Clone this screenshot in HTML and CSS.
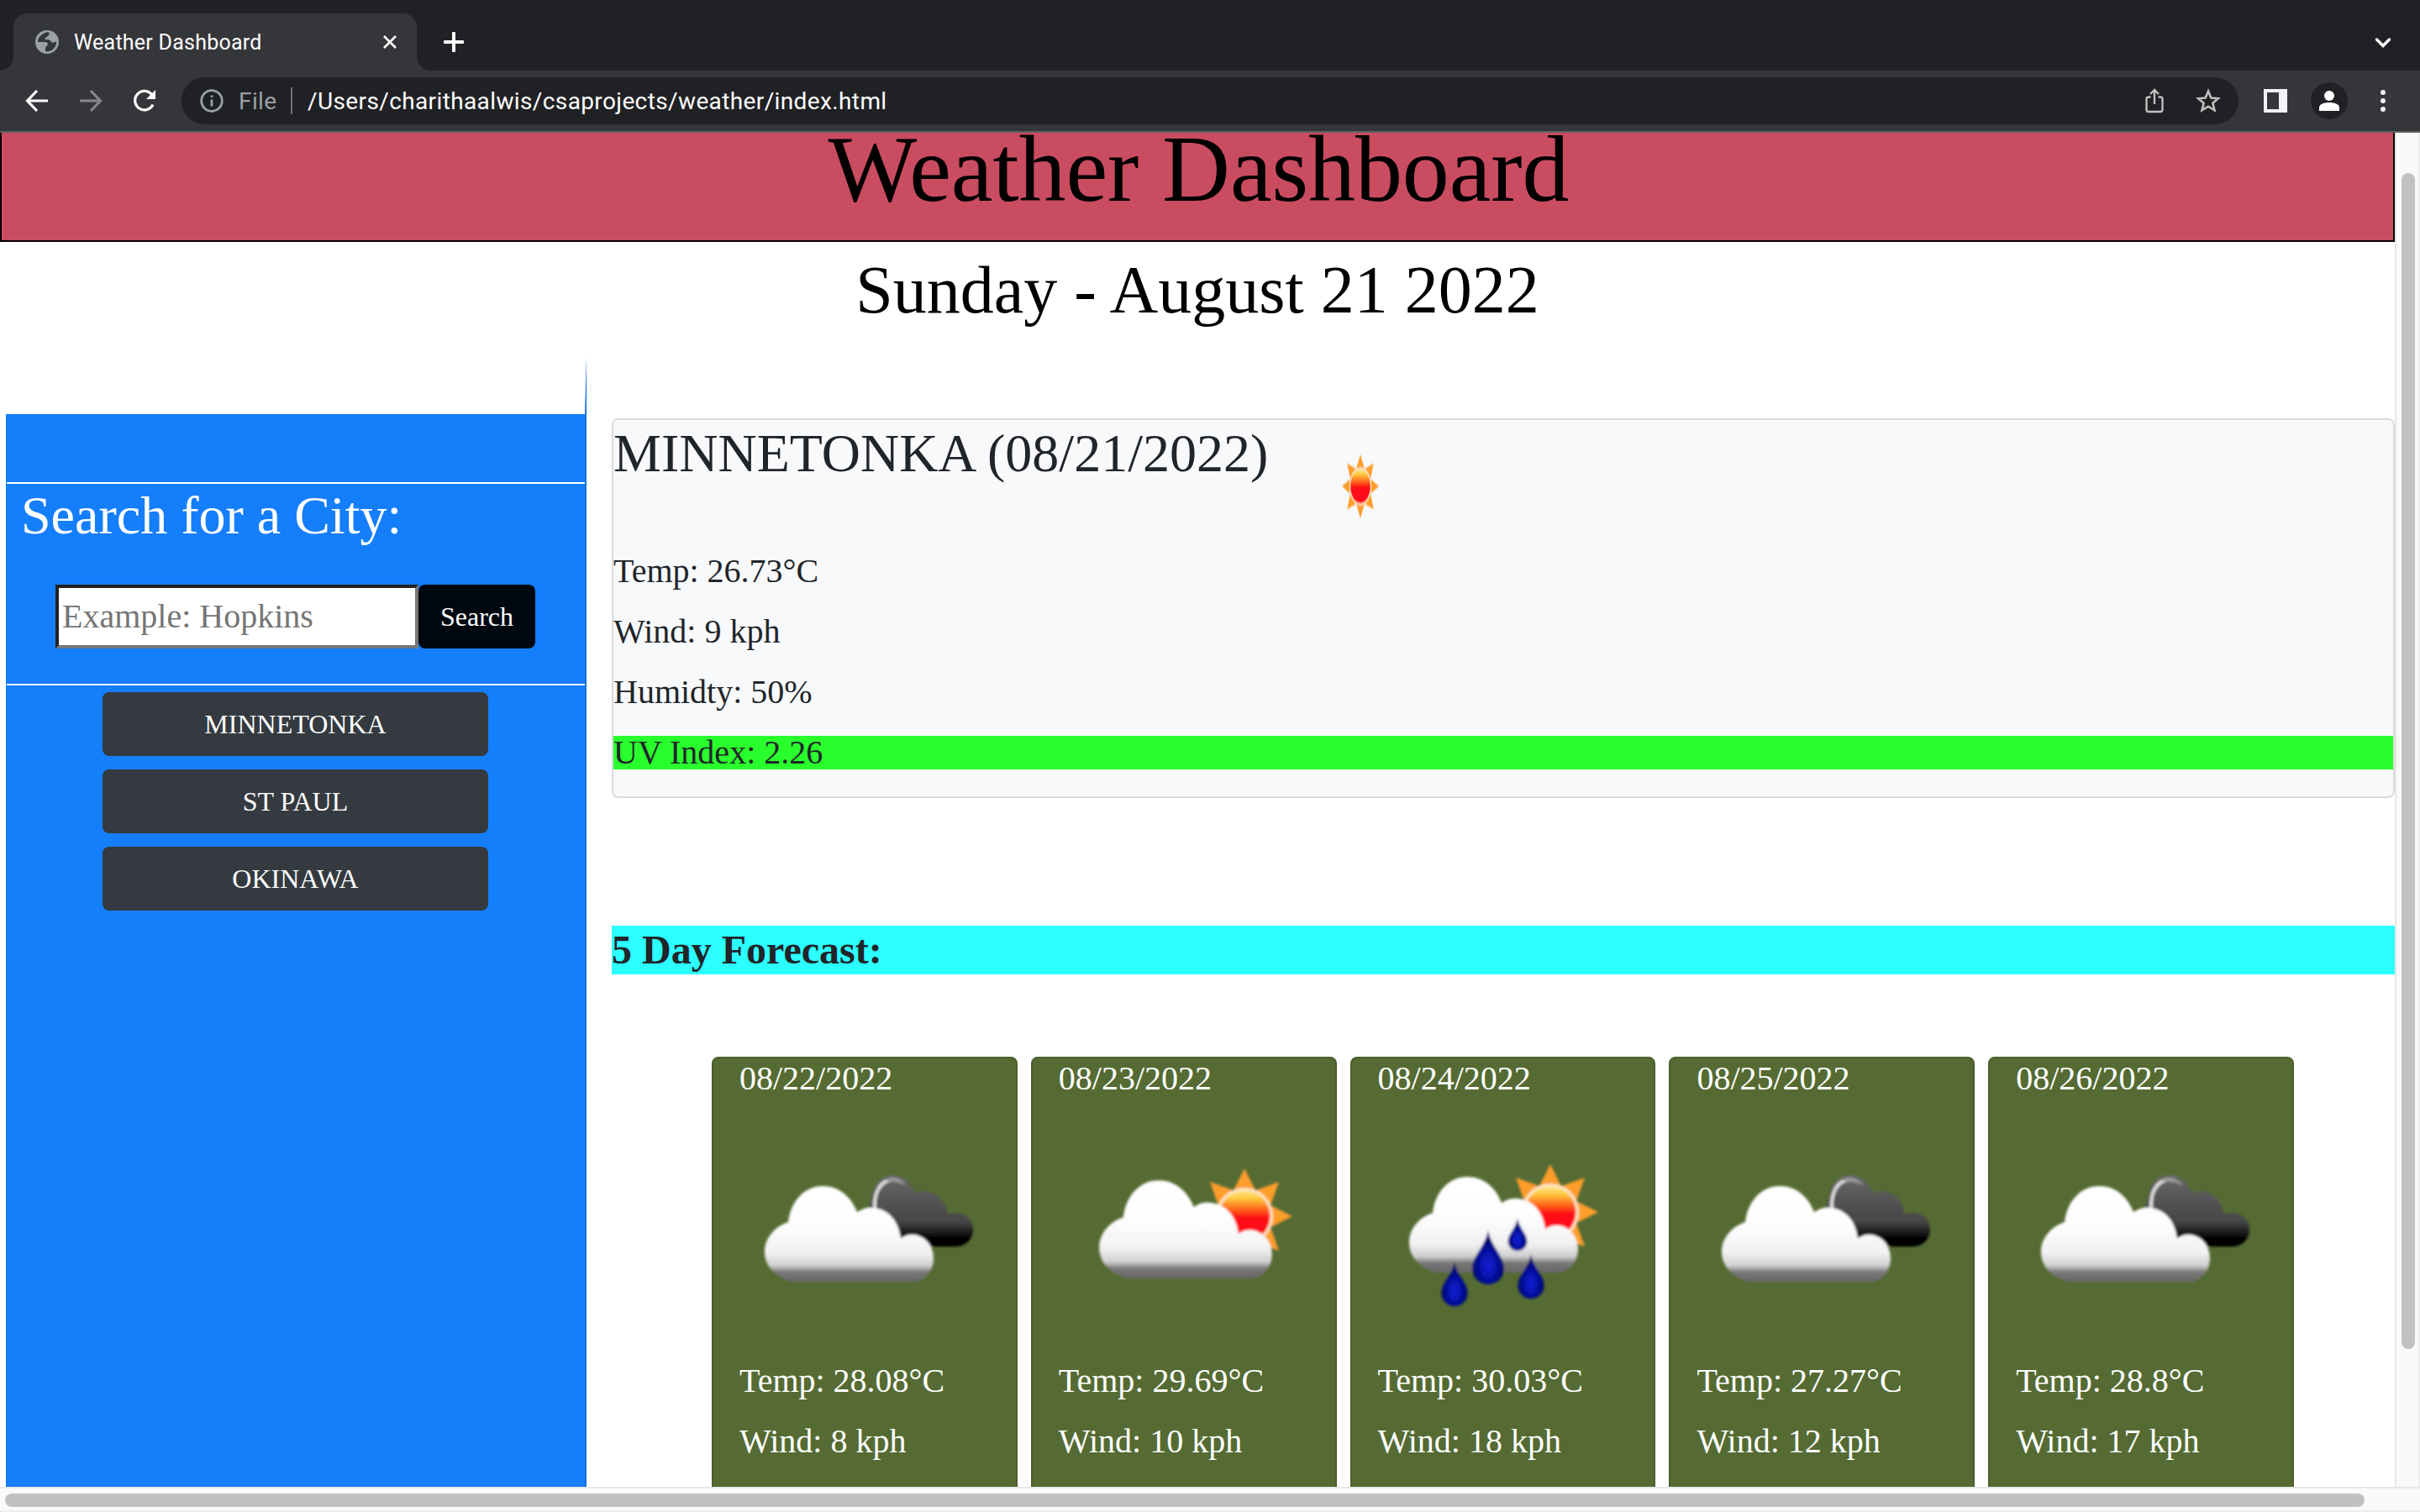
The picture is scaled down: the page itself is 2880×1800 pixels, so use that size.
FILE: index.html
```html
<!DOCTYPE html>
<html lang="en">
<head>
<meta charset="utf-8">
<title>Weather Dashboard</title>
<link rel="stylesheet" href="styles.css">
</head>
<body>
<svg class="defs" width="0" height="0" aria-hidden="true">
  <defs>
    <filter id="soft" x="-10%" y="-10%" width="120%" height="120%"><feGaussianBlur stdDeviation="1.5"/></filter>
    <linearGradient id="gWhite" x1="0" y1="0" x2="0" y2="1">
      <stop offset="0" stop-color="#fff"/><stop offset=".42" stop-color="#fdfdfd"/><stop offset=".7" stop-color="#f1f1f1"/><stop offset=".83" stop-color="#cfcfcf"/><stop offset=".9" stop-color="#777"/><stop offset="1" stop-color="#666"/>
    </linearGradient>
    <linearGradient id="gDark" x1="0" y1="0" x2="0" y2="1">
      <stop offset="0" stop-color="#686868"/><stop offset=".3" stop-color="#565656"/><stop offset=".65" stop-color="#464646"/><stop offset=".88" stop-color="#050505"/><stop offset="1" stop-color="#000"/>
    </linearGradient>
    <linearGradient id="gSun" x1="0" y1="0" x2="0" y2="1">
      <stop offset="0" stop-color="#ffe48c"/><stop offset=".15" stop-color="#ffc93c"/><stop offset=".42" stop-color="#ff4a14"/><stop offset=".52" stop-color="#ff1018"/><stop offset="1" stop-color="#ff0c1c"/>
    </linearGradient>
    <radialGradient id="gDrop" cx=".5" cy=".65" r=".5">
      <stop offset="0" stop-color="#0d20d8"/><stop offset=".5" stop-color="#0612a8"/><stop offset="1" stop-color="#02066a"/>
    </radialGradient>
    <path id="cloud" d="M60 214C42 208 29 196 29 178C29 162 41 148 57 143C60 118 76 100 98 100C118 100 132 113 139 131C146 126 152 125 160 126C178 129 188 142 191 162C197 158 202 157 208 158C221 160 230 172 230 186C230 200 222 210 210 214Z"/>
    <g id="sun">
      <path fill="#ff9d2b" d="M0-57L13-31L41-41L31-13L57 0L31 13L41 41L13 31L0 57L-13 31L-41 41L-31 13L-57 0L-31-13L-41-41L-13-31Z"/>
      <circle r="34" fill="#ffe6c4"/>
      <circle r="30.500" fill="url(#gSun)"/>
    </g>
    <path id="drop" d="M0-42C4-22 19-12 19 3A19 19 0 0 1-19 3C-19-12-4-22 0-42Z" fill="url(#gDrop)"/>
    <symbol id="clouds" viewBox="0 0 300 300">
      <g filter="url(#soft)" transform="translate(1 0)">
        <path fill="url(#gDark)" d="M140 134C152 128 155 122 157 109C161 94 170 87 182 87C194 87 203 96 209 108C226 102 243 112 247 133C262 129 277 136 277 151C277 164 268 172 256 172H200Z"/>
        <path fill="none" stroke="#ddd" stroke-width="4" stroke-linecap="round" d="M160 126C159 107 167 93 182 92"/>
        <path fill="#999" d="M172 93C180 87 191 90 198 99C190 95 180 95 172 93Z"/>
        <use href="#cloud" fill="url(#gWhite)"/>
      </g>
    </symbol>
    <symbol id="partly" viewBox="0 0 300 300">
      <g filter="url(#soft)">
        <use href="#sun" x="221" y="136"/>
        <use href="#cloud" fill="url(#gWhite)" transform="translate(18.500 -9) scale(1.023)"/>
      </g>
    </symbol>
    <symbol id="rain" viewBox="0 0 300 300">
      <g filter="url(#soft)">
        <use href="#sun" x="205" y="131"/>
        <use href="#cloud" fill="url(#gWhite)" transform="translate(8 -11)"/>
        <use href="#drop" transform="translate(166 164) scale(.6)"/>
        <use href="#drop" transform="translate(131 195)"/>
        <use href="#drop" transform="translate(91 225) scale(.82)"/>
        <use href="#drop" transform="translate(182 216) scale(.82)"/>
      </g>
    </symbol>
  </defs>
</svg>

<div class="browser">
  <div class="tabstrip">
    <div class="tab">
      <svg class="favicon" viewBox="0 0 28 28"><circle cx="14" cy="14" r="14" fill="#9aa0a6"/><path fill="#35363a" d="M12 3C7 5 3 9 3 14h9c2 0 3 2 3 3s-3 2-3 4v4c5 1 9-1 12-6 1-2 1-4 1-6-2 2-4 2-6 1-1-3-4-3-7-3-1-2 1-3 3-4s1-3 2-4c-2-1-4-1-5 0Z"/></svg>
      <span class="tab-title">Weather Dashboard</span>
      <svg class="tab-close" viewBox="0 0 20 20"><path d="M3 3L17 17M17 3L3 17"/></svg>
    </div>
    <svg class="new-tab" viewBox="0 0 24 24"><path d="M12 1.500V22.500M1.500 12H22.500"/></svg>
    <svg class="chevron" viewBox="0 0 20 14"><path d="M2.500 3L10 10.500L17.500 3"/></svg>
  </div>
  <div class="toolbar">
    <svg class="nav back" viewBox="0 0 28 28"><path d="M27 14H3M14 2L2.500 14L14 26"/></svg>
    <svg class="nav forward" viewBox="0 0 28 28"><path d="M1 14H25M14 2L25.500 14L14 26"/></svg>
    <svg class="nav reload" viewBox="0 0 28 28"><path d="M24 18.500A11.200 11.200 0 1 1 22.500 6.500"/><path class="solid" d="M27 1V12H16Z"/></svg>
    <div class="omnibox">
      <svg class="info" viewBox="0 0 28 28"><circle cx="14" cy="14" r="12.300"/><path d="M14 12.500V20.500M14 7.500V10"/></svg>
      <span class="scheme">File</span>
      <span class="divider"></span>
      <span class="url">/Users/charithaalwis/csaprojects/weather/index.html</span>
      <svg class="share" viewBox="0 0 24 32"><path d="M7.500 11.500H5A2.500 2.500 0 0 0 2.500 14V26.500A2.500 2.500 0 0 0 5 29H19A2.500 2.500 0 0 0 21.500 26.500V14A2.500 2.500 0 0 0 19 11.500H16.500M12 20V3.500M7 8L12 3L17 8"/></svg>
      <svg class="star" viewBox="0 0 30 30"><path d="M15 3.500L18.300 11.500L27 12.200L20.400 17.800L22.500 26.300L15 21.700L7.500 26.300L9.600 17.800L3 12.200L11.700 11.500Z"/></svg>
    </div>
    <svg class="panel" viewBox="0 0 28 28"><path fill-rule="evenodd" d="M0 0H28V28H0ZM4 4V24H18V4Z"/></svg>
    <svg class="avatar" viewBox="0 0 44 44"><circle cx="22" cy="22" r="22" fill="#202124"/><circle cx="22" cy="16" r="6" fill="#fff"/><path fill="#fff" d="M10 34V30C10 26 16 24 22 24S34 26 34 30V34Z"/></svg>
    <svg class="more" viewBox="0 0 6 26"><circle cx="3" cy="3" r="3"/><circle cx="3" cy="13" r="3"/><circle cx="3" cy="23" r="3"/></svg>
  </div>
</div>

<div class="viewport">
  <main class="page">
    <h1 class="banner">Weather Dashboard</h1>
    <p class="today">Sunday - August 21 2022</p>
    <div class="layout">
      <aside class="sidebar">
        <div class="search">
          <h2>Search for a City:</h2>
          <form class="search-row">
            <input type="text" placeholder="Example: Hopkins">
            <button type="button">Search</button>
          </form>
        </div>
        <div class="history">
          <button>MINNETONKA</button>
          <button>ST PAUL</button>
          <button>OKINAWA</button>
        </div>
      </aside>
      <section class="content">
        <article class="current">
          <div class="current-head">
            <h2>MINNETONKA (08/21/2022)</h2>
            <svg class="current-icon" viewBox="-57 -57 114 114" preserveAspectRatio="none"><use href="#sun" filter="url(#soft)"/></svg>
          </div>
          <p>Temp: 26.73°C</p>
          <p>Wind: 9 kph</p>
          <p>Humidty: 50%</p>
          <p class="uv">UV Index: 2.26</p>
        </article>
        <h3 class="forecast-title">5 Day Forecast:</h3>
        <div class="forecast">
          <article class="day"><p>08/22/2022</p><svg><use href="#clouds"/></svg><p>Temp: 28.08°C</p><p>Wind: 8 kph</p></article>
          <article class="day"><p>08/23/2022</p><svg><use href="#partly"/></svg><p>Temp: 29.69°C</p><p>Wind: 10 kph</p></article>
          <article class="day"><p>08/24/2022</p><svg><use href="#rain"/></svg><p>Temp: 30.03°C</p><p>Wind: 18 kph</p></article>
          <article class="day"><p>08/25/2022</p><svg><use href="#clouds"/></svg><p>Temp: 27.27°C</p><p>Wind: 12 kph</p></article>
          <article class="day"><p>08/26/2022</p><svg><use href="#clouds"/></svg><p>Temp: 28.8°C</p><p>Wind: 17 kph</p></article>
        </div>
      </section>
    </div>
  </main>
  <div class="vscroll"><div class="vthumb"></div></div>
  <div class="hscroll"><div class="hthumb"></div></div>
</div>
</body>
</html>
```
FILE: styles.css
```css
* { box-sizing: border-box; }
body {
  margin: 0;
  width: 2880px;
  height: 1800px;
  overflow: hidden;
  display: flex;
  flex-direction: column;
  background: #fff;
  font-family: "Liberation Serif", "Times New Roman", serif;
  color: #212529;
}
h1, h2, h3, p { margin: 0; font-weight: 400; }
svg { display: block; flex: none; }
.defs { position: absolute; }

/* Browser frame */
.browser { height: 158px; flex: none; font-family: Roboto, sans-serif; border-bottom: 2px solid #5f6164; background: #35363a; }
.tabstrip { height: 84px; background: #202124; display: flex; align-items: flex-end; padding-left: 16px; }
.tab { position: relative; width: 480px; height: 68px; background: #35363a; border-radius: 16px 16px 0 0; display: flex; align-items: center; padding: 0 22px 0 26px; }
.tab::before, .tab::after { content: ""; position: absolute; bottom: 0; width: 16px; height: 16px; }
.tab::before { left: -16px; background: radial-gradient(circle at 0 0, #202124 15.5px, #35363a 16px); }
.tab::after { right: -16px; background: radial-gradient(circle at 100% 0, #202124 15.5px, #35363a 16px); }
.favicon { width: 28px; height: 28px; }
.tab-title { margin-left: 18px; font-size: 25px; letter-spacing: .25px; color: #fff; flex: 1; white-space: nowrap; }
.tab-close { width: 20px; height: 20px; fill: none; stroke: #fff; stroke-width: 2.6; }
.new-tab { width: 24px; height: 24px; margin: 0 0 22px 32px; fill: none; stroke: #fff; stroke-width: 4; stroke-linecap: round; }
.chevron { width: 20px; height: 14px; margin: 0 34px 26px auto; fill: none; stroke: #fff; stroke-width: 3.4; stroke-linecap: round; }
.toolbar { height: 72px; display: flex; align-items: center; padding: 0 41px 0 30px; }
.nav { width: 28px; height: 28px; fill: none; stroke: #fff; stroke-width: 3.2; }
.forward { margin-left: 36px; stroke: #85868a; }
.reload { margin-left: 36px; }
.reload .solid { fill: #fff; stroke: none; }
.omnibox { margin-left: 30px; width: 2448px; height: 56px; border-radius: 28px; background: #202124; display: flex; align-items: center; padding-left: 22px; font-size: 28px; }
.info { width: 28px; height: 28px; fill: none; stroke: #9aa0a6; stroke-width: 2.8; }
.scheme { margin-left: 18px; width: 46px; color: #9aa0a6; letter-spacing: .4px; }
.divider { width: 2px; height: 32px; margin-left: 16px; background: #6d7075; }
.url { margin-left: 18px; color: #fff; letter-spacing: .38px; }
.share { width: 24px; height: 32px; margin-left: auto; fill: none; stroke: #c0c0c0; stroke-width: 2.4; }
.star { width: 30px; height: 30px; margin: 0 21px 0 37px; fill: none; stroke: #c0c0c0; stroke-width: 2.6; }
.panel { width: 28px; height: 28px; margin-left: 30px; fill: #f1f3f6; }
.avatar { width: 44px; height: 44px; margin-left: 28px; }
.more { width: 6px; height: 26px; margin-left: 39px; fill: #f1f3f6; }

/* Viewport and scrollbars */
.viewport { flex: 1; display: grid; grid-template-columns: 2850px 30px; grid-template-rows: 1612px 30px; }
.page { overflow: hidden; background: #fff; }
.vscroll { background: #fafafa; border-left: 2px solid #e7e7e7; border-right: 2px solid #ededed; padding: 48px 0 0 6px; }
.vthumb { width: 16px; height: 1400px; border-radius: 8px; background: #c1c1c1; }
.hscroll { grid-column: 1 / 3; background: #fafafa; border-top: 2px solid #e7e7e7; border-bottom: 2px solid #ededed; padding: 6px 0 0 6px; }
.hthumb { width: 2808px; height: 16px; border-radius: 8px; background: #c1c1c1; }

/* Page header */
.banner { height: 130px; padding-left: 3px; border: 2px solid #000; border-top: 0; background: #ca4c60; color: #000; text-align: center; font-size: 112px; line-height: 86px; letter-spacing: -.1px; }
.today { height: 136px; padding-top: 9px; color: #000; text-align: center; font-size: 80px; line-height: 96px; }
.layout { display: flex; align-items: flex-start; }

/* Sidebar */
.sidebar { width: 691px; height: 1500px; margin-left: 7px; background: #157efb; border-top: 69px solid #fff; border-right: 2px solid #136fdc; padding: 81px 0 0 1px; }
.search { height: 242px; border: 2px solid #fff; border-width: 2px 0; color: #fff; }
.search h2 { padding: 0 0 0 17px; font-size: 64px; line-height: 76px; }
.search-row { display: flex; margin: 44px 0 0 58px; }
.search-row input { width: 432px; height: 76px; padding: 0 4px 1px; border: 4px solid; border-color: #212121 #767676 #767676 #212121; border-radius: 0; background: #fff; font: 40px "Liberation Serif", serif; }
.search-row input::placeholder { color: #757575; }
.search-row button { width: 139px; height: 76px; border: 0; border-radius: 8px; background: #00080f; color: #fff; font: 32px "Liberation Serif", serif; padding: 0; }
.history { display: flex; flex-direction: column; gap: 16px; padding: 8px 0 0 114px; }
.history button { width: 459px; height: 76px; border: 0; border-radius: 8px; background: #343a40; color: #fff; font: 32px "Liberation Serif", serif; }

/* Current conditions */
.content { width: 2122px; margin: 74px 0 0 30px; }
.current { height: 452px; border: 2px solid #d9dadc; border-radius: 8px; background: #f8f9fb; font-size: 40px; line-height: 40px; }
.current-head { display: flex; align-items: flex-start; height: 160px; border-top: 2px solid #fff; border-radius: 6px 6px 0 0; }
.current-head h2 { font-size: 64px; line-height: 76px; white-space: nowrap; }
.current-icon { width: 44px; height: 76px; margin: 39px 0 0 88px; overflow: visible; }
.current p { margin-bottom: 32px; }
.current .uv { background: #29ff2d; }

/* Forecast */
.forecast-title { margin-top: 152px; height: 58px; background: #2bffff; font-size: 48px; font-weight: 700; line-height: 58px; }
.forecast { display: flex; gap: 16px; margin: 98px 0 0 119px; }
.day { width: 363.8px; height: 700px; border: 2px solid #4b5e2d; border-radius: 8px; background: #556b33; color: #fff; padding: 4px 0 0 31px; font-size: 40px; line-height: 40px; }
.day svg { width: 300px; height: 300px; margin: 8px 0 12px; overflow: visible; }
.day p + p { margin-top: 32px; }
```
